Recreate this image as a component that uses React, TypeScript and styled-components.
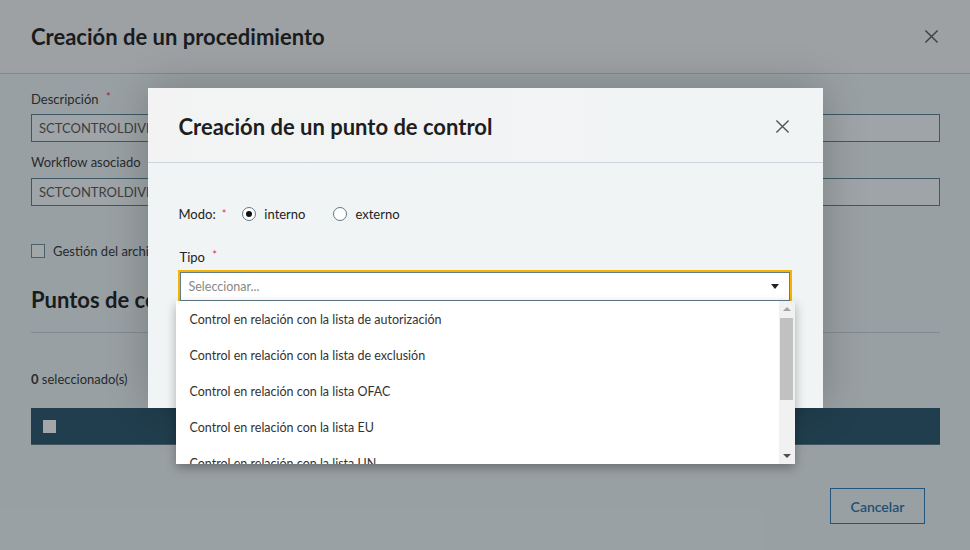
import styled, { createGlobalStyle } from 'styled-components';

const GlobalStyle = createGlobalStyle`
  html, body {
    margin: 0;
    padding: 0;
    height: 100%;
  }
  body {
    font-family: 'Lato', 'Liberation Sans', sans-serif;
    color: #222;
  }
  * {
    box-sizing: border-box;
  }
`;

const options = [
  'Control en relación con la lista de autorización',
  'Control en relación con la lista de exclusión',
  'Control en relación con la lista OFAC',
  'Control en relación con la lista EU',
  'Control en relación con la lista UN',
];

const CloseIcon = ({ size = 15 }: { size?: number }) => (
  <svg width={size} height={size} viewBox="0 0 16 16" fill="none">
    <path d="M1.5 1.5L14.5 14.5M14.5 1.5L1.5 14.5" stroke="#555" strokeWidth="1.5" />
  </svg>
);

const App = () => {
  return (
    <>
      <GlobalStyle />
      <Page>
        <OuterDialog>
          <OuterHeader>
            <OuterTitle>Creación de un procedimiento</OuterTitle>
            <CloseButton type="button">
              <CloseIcon />
            </CloseButton>
          </OuterHeader>
          <OuterBody>
            <FieldLabel>
              Descripción <Required>*</Required>
            </FieldLabel>
            <TextInput $top={6}>SCTCONTROLDIVISION</TextInput>
            <FieldLabel $top={11}>
              Workflow asociado <Required>*</Required>
            </FieldLabel>
            <TextInput $top={7}>SCTCONTROLDIVISION</TextInput>
            <CheckRow>
              <CheckBox />
              Gestión del archivo
            </CheckRow>
            <SectionTitle>Puntos de control</SectionTitle>
            <SelectedCount>
              <b>0</b> seleccionado(s)
            </SelectedCount>
            <TableHead>
              <HeadCheck />
            </TableHead>
            <Footer>
              <SecondaryButton type="button">Cancelar</SecondaryButton>
            </Footer>
          </OuterBody>
        </OuterDialog>

        <Backdrop>
          <InnerDialog>
            <InnerHeader>
              <InnerTitle>Creación de un punto de control</InnerTitle>
              <CloseButton type="button">
                <CloseIcon />
              </CloseButton>
            </InnerHeader>
            <InnerBody>
              <ModeRow>
                <span>Modo:</span>
                <Required $gap={6}>*</Required>
                <RadioOption $gap={16}>
                  <Radio $checked />
                  interno
                </RadioOption>
                <RadioOption $gap={28}>
                  <Radio />
                  externo
                </RadioOption>
              </ModeRow>
              <FieldLabel $top={24} $dark>
                Tipo <Required>*</Required>
              </FieldLabel>
              <SelectWrap>
                <SelectBox>
                  <Placeholder>Seleccionar...</Placeholder>
                  <Caret />
                </SelectBox>
                <Menu>
                  <MenuList>
                    {options.map((o) => (
                      <MenuItem key={o}>{o}</MenuItem>
                    ))}
                  </MenuList>
                  <ScrollTrack>
                    <ArrowUp />
                    <Thumb />
                    <ArrowDown />
                  </ScrollTrack>
                </Menu>
              </SelectWrap>
            </InnerBody>
          </InnerDialog>
        </Backdrop>
      </Page>
    </>
  );
};

const Page = styled.div`
  position: relative;
  width: 100%;
  height: 100vh;
  overflow: hidden;
  background: #ebf1f3;
`;

const OuterDialog = styled.div`
  display: flex;
  flex-direction: column;
  height: 100%;
`;

const OuterHeader = styled.div`
  display: flex;
  align-items: center;
  justify-content: space-between;
  height: 74px;
  padding: 0 31px;
  background: #f2f2f3;
  border-bottom: 1px solid #c2cfd6;
`;

const OuterTitle = styled.h1`
  margin: 0;
  font-size: 22px;
  font-weight: 700;
  color: #1c1c1c;
`;

const CloseButton = styled.button`
  display: flex;
  align-items: center;
  justify-content: center;
  padding: 0;
  border: 0;
  background: transparent;
  cursor: pointer;
`;

const OuterBody = styled.div`
  display: flex;
  flex-direction: column;
  flex: 1;
  padding: 16px 30px 0 31px;
`;

const FieldLabel = styled.div<{ $top?: number; $dark?: boolean }>`
  margin-top: ${({ $top }) => $top ?? 0}px;
  font-size: 13px;
  line-height: 18px;
  color: ${({ $dark }) => ($dark ? '#222' : '#333')};
`;

const Required = styled.span<{ $gap?: number }>`
  margin-left: ${({ $gap }) => $gap ?? 4}px;
  font-size: 11px;
  vertical-align: top;
  line-height: 14px;
  color: #e0334a;
`;

const TextInput = styled.div<{ $top?: number }>`
  margin-top: ${({ $top }) => $top ?? 0}px;
  height: 28px;
  padding: 0 7px;
  display: flex;
  align-items: center;
  font-size: 13px;
  color: #555;
  background: #f3f7f8;
  border: 1px solid #587f8f;
  overflow: hidden;
  white-space: nowrap;
`;

const CheckRow = styled.div`
  display: flex;
  align-items: center;
  gap: 8px;
  margin-top: 35px;
  height: 20px;
  font-size: 13px;
  color: #333;
`;

const CheckBox = styled.span`
  width: 14px;
  height: 14px;
  border: 1px solid #6f8c98;
  background: #f7fafb;
`;

const SectionTitle = styled.h2`
  margin: 25px 0 0;
  padding-bottom: 18px;
  font-size: 22px;
  line-height: 28px;
  font-weight: 700;
  color: #1c1c1c;
  border-bottom: 1px solid #c2cfd6;
`;

const SelectedCount = styled.div`
  margin-top: 37px;
  font-size: 13px;
  line-height: 18px;
  color: #333;

  b {
    font-weight: 700;
  }
`;

const TableHead = styled.div`
  display: flex;
  align-items: center;
  margin-top: 20px;
  height: 37px;
  padding-left: 12px;
  background: #29536a;
  border-bottom: 1px solid #5d7884;
`;

const HeadCheck = styled.span`
  width: 13px;
  height: 13px;
  background: #fafcfd;
`;

const Footer = styled.div`
  display: flex;
  justify-content: flex-end;
  margin-top: 43px;
  padding-right: 15px;
`;

const SecondaryButton = styled.button`
  width: 95px;
  height: 36px;
  font-family: inherit;
  font-size: 14px;
  font-weight: 600;
  color: #2a6ea6;
  background: transparent;
  border: 1px solid #2a76b5;
  cursor: pointer;
`;

const Backdrop = styled.div`
  position: absolute;
  inset: 0;
  display: flex;
  justify-content: center;
  align-items: flex-start;
  padding-top: 88px;
  background: rgba(20, 30, 35, 0.38);
`;

const InnerDialog = styled.div`
  width: 675px;
  height: 320px;
  background: #f0f4f5;
  box-shadow: 0 0 40px rgba(0, 0, 0, 0.22);
`;

const InnerHeader = styled.div`
  display: flex;
  align-items: center;
  justify-content: space-between;
  height: 75px;
  padding: 2px 33px 0 31px;
  background: linear-gradient(90deg, #f3f3f3, #f0f4f5);
  border-bottom: 1px solid #cdd5dc;
`;

const InnerTitle = styled.h2`
  margin: 0;
  font-size: 22px;
  font-weight: 700;
  color: #1e1e1e;
`;

const InnerBody = styled.div`
  display: flex;
  flex-direction: column;
  padding: 41px 33px 0 32px;
`;

const ModeRow = styled.div`
  display: flex;
  align-items: center;
  height: 20px;
  font-size: 13px;
  color: #222;

  > span:first-child {
    margin-left: -1px;
  }
`;

const RadioOption = styled.label<{ $gap: number }>`
  display: flex;
  align-items: center;
  gap: 8px;
  margin-left: ${({ $gap }) => $gap}px;
  font-size: 13px;
  color: #222;
`;

const Radio = styled.span<{ $checked?: boolean }>`
  position: relative;
  width: 14px;
  height: 14px;
  border-radius: 50%;
  border: 1px solid #5d7a88;
  background: #fff;

  &::after {
    content: '';
    display: ${({ $checked }) => ($checked ? 'block' : 'none')};
    position: absolute;
    left: 3px;
    top: 3px;
    width: 6px;
    height: 6px;
    border-radius: 50%;
    background: #111;
  }
`;

const SelectWrap = styled.div`
  position: relative;
  margin-top: 6px;
`;

const SelectBox = styled.div`
  display: flex;
  align-items: center;
  justify-content: space-between;
  height: 29px;
  padding: 0 10px 0 8px;
  background: #fff;
  border: 1px solid #607d8b;
  box-shadow: 0 0 0 2px #f5b400;
`;

const Placeholder = styled.span`
  font-size: 12.5px;
  color: #888;
`;

const Caret = styled.span`
  width: 0;
  height: 0;
  border-left: 4px solid transparent;
  border-right: 4px solid transparent;
  border-top: 5px solid #222;
`;

const Menu = styled.div`
  position: absolute;
  left: -4px;
  top: 29px;
  width: 619px;
  height: 163px;
  display: flex;
  background: #fff;
  box-shadow: 0 4px 10px rgba(0, 0, 0, 0.3);
  z-index: 2;
`;

const MenuList = styled.ul`
  flex: 1;
  margin: 0;
  padding: 0;
  list-style: none;
  overflow: hidden;
`;

const MenuItem = styled.li`
  height: 36px;
  display: flex;
  align-items: center;
  padding-left: 14px;
  font-size: 12.5px;
  color: #333;
  white-space: nowrap;
`;

const ScrollTrack = styled.div`
  width: 16px;
  display: flex;
  flex-direction: column;
  align-items: center;
  background: #f1f1f1;
`;

const ArrowUp = styled.span`
  margin-top: 6px;
  width: 0;
  height: 0;
  border-left: 4px solid transparent;
  border-right: 4px solid transparent;
  border-bottom: 4px solid #a3a3a3;
`;

const Thumb = styled.span`
  margin-top: 7px;
  width: 13px;
  height: 82px;
  background: #c1c1c1;
`;

const ArrowDown = styled.span`
  margin-top: auto;
  margin-bottom: 6px;
  width: 0;
  height: 0;
  border-left: 4px solid transparent;
  border-right: 4px solid transparent;
  border-top: 4px solid #505050;
`;

export default App;
